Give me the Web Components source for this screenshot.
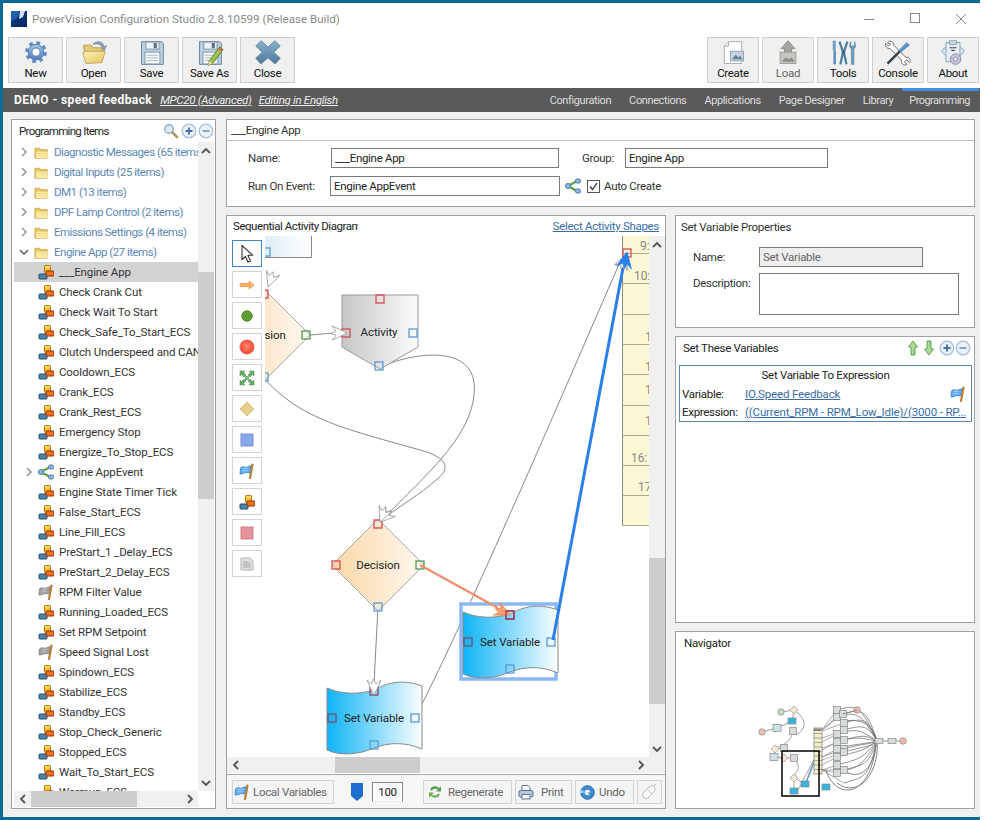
<!DOCTYPE html>
<html>
<head>
<meta charset="utf-8">
<title>PowerVision Configuration Studio</title>
<style>
  html, body { margin: 0; padding: 0; background: #fff; }
  body { font: 11.5px Roboto, "Liberation Sans", sans-serif; letter-spacing: -.3px; color: #222; overflow: hidden; }
</style>
</head>
<body>
<pv-app>
  <pv-title-bar slot="title">PowerVision Configuration Studio 2.8.10599 (Release Build)</pv-title-bar>
  <pv-toolbar slot="toolbar">
    <pv-tool-button icon="gear" slot="left">New</pv-tool-button>
    <pv-tool-button icon="open" slot="left">Open</pv-tool-button>
    <pv-tool-button icon="save" slot="left">Save</pv-tool-button>
    <pv-tool-button icon="saveas" slot="left">Save As</pv-tool-button>
    <pv-tool-button icon="close" slot="left">Close</pv-tool-button>
    <pv-tool-button icon="create" slot="right" narrow>Create</pv-tool-button>
    <pv-tool-button icon="load" slot="right" narrow dim>Load</pv-tool-button>
    <pv-tool-button icon="tools" slot="right" narrow>Tools</pv-tool-button>
    <pv-tool-button icon="console" slot="right" narrow>Console</pv-tool-button>
    <pv-tool-button icon="about" slot="right" narrow>About</pv-tool-button>
  </pv-toolbar>
  <pv-nav-bar slot="nav"></pv-nav-bar>

  <pv-tree-panel slot="tree">
    <pv-tree-row kind="group">Diagnostic Messages (65 items)</pv-tree-row>
    <pv-tree-row kind="group">Digital Inputs (25 items)</pv-tree-row>
    <pv-tree-row kind="group">DM1 (13 items)</pv-tree-row>
    <pv-tree-row kind="group">DPF Lamp Control (2 items)</pv-tree-row>
    <pv-tree-row kind="group">Emissions Settings (4 items)</pv-tree-row>
    <pv-tree-row kind="group" open>Engine App (27 items)</pv-tree-row>
    <pv-tree-row selected>___Engine App</pv-tree-row>
    <pv-tree-row>Check Crank Cut</pv-tree-row>
    <pv-tree-row>Check Wait To Start</pv-tree-row>
    <pv-tree-row>Check_Safe_To_Start_ECS</pv-tree-row>
    <pv-tree-row>Clutch Underspeed and CAN</pv-tree-row>
    <pv-tree-row>Cooldown_ECS</pv-tree-row>
    <pv-tree-row>Crank_ECS</pv-tree-row>
    <pv-tree-row>Crank_Rest_ECS</pv-tree-row>
    <pv-tree-row>Emergency Stop</pv-tree-row>
    <pv-tree-row>Energize_To_Stop_ECS</pv-tree-row>
    <pv-tree-row kind="event">Engine AppEvent</pv-tree-row>
    <pv-tree-row>Engine State Timer Tick</pv-tree-row>
    <pv-tree-row>False_Start_ECS</pv-tree-row>
    <pv-tree-row>Line_Fill_ECS</pv-tree-row>
    <pv-tree-row>PreStart_1 _Delay_ECS</pv-tree-row>
    <pv-tree-row>PreStart_2_Delay_ECS</pv-tree-row>
    <pv-tree-row kind="flag">RPM Filter Value</pv-tree-row>
    <pv-tree-row>Running_Loaded_ECS</pv-tree-row>
    <pv-tree-row>Set RPM Setpoint</pv-tree-row>
    <pv-tree-row kind="flag">Speed Signal Lost</pv-tree-row>
    <pv-tree-row>Spindown_ECS</pv-tree-row>
    <pv-tree-row>Stabilize_ECS</pv-tree-row>
    <pv-tree-row>Standby_ECS</pv-tree-row>
    <pv-tree-row>Stop_Check_Generic</pv-tree-row>
    <pv-tree-row>Stopped_ECS</pv-tree-row>
    <pv-tree-row>Wait_To_Start_ECS</pv-tree-row>
    <pv-tree-row>Warmup_ECS</pv-tree-row>
  </pv-tree-panel>

  <pv-header-panel slot="header"></pv-header-panel>
  <pv-diagram-panel slot="diagram"></pv-diagram-panel>
  <pv-props-panel slot="props"></pv-props-panel>
  <pv-vars-panel slot="vars"></pv-vars-panel>
  <pv-navigator slot="navigator"></pv-navigator>
</pv-app>

<script>
// Icons, all hand drawn. [viewBox size, markup]
const blockIcon = `
  <defs><linearGradient id="y" x1="0" y1="0" x2="0" y2="1"><stop offset="0" stop-color="#ffe46a"/><stop offset="1" stop-color="#f5a800"/></linearGradient></defs>
  <rect x="6.5" y="1.5" width="6" height="7" rx=".8" fill="url(#y)" stroke="#b07a10"/>
  <rect x="1" y="10" width="8" height="5" rx=".8" fill="#4d86a8" stroke="#1f4c6c"/>
  <rect x="8" y="7" width="8" height="5" rx=".8" fill="#f4701c" stroke="#8e2c0c"/>`;
const flagShape = (c1, c2) => `
  <path d="M1.5 5 C4 2.5 6 5 8 4 L12.5 2.5 L11 9.5 C9 10.5 7 8.5 4.5 10.5 L1 11 Z" fill="${c1}" stroke="${c2}" stroke-width=".8"/>
  <path d="M4 5.5 L9 5 M3.5 8 L8 7.5" stroke="#fff" stroke-width=".7" opacity=".6"/>
  <path d="M13.5 1.5 L11 15" stroke="#b5803a" stroke-width="2.2" stroke-linecap="round"/>`;
const floppy = `
  <path d="M4 3 H27 L29 5 V29 H4 Z" fill="#b9cfe0" stroke="#5f7f9c"/>
  <rect x="9" y="3.5" width="15" height="8" fill="#eef2f5" stroke="#7d93a8"/>
  <rect x="18" y="4.5" width="3.5" height="6" fill="#54708a"/>
  <rect x="8" y="15" width="17" height="13.5" fill="#fafafa" stroke="#7d93a8"/>
  <path d="M10 18.5 H23 M10 21.5 H23 M10 24.5 H23" stroke="#9fb1c2"/>`;
const ICONS = {
  gear: [32, `<defs><linearGradient id="g" x1="0" y1="0" x2="0" y2="1"><stop offset="0" stop-color="#a9c8ea"/><stop offset="1" stop-color="#4f7fb5"/></linearGradient></defs>
    <circle cx="16" cy="15" r="10.3" fill="none" stroke="#5f8fc4" stroke-width="4.4" stroke-dasharray="4.1 4"/>
    <circle cx="16" cy="15" r="9" fill="url(#g)" stroke="#4a78ad"/>
    <circle cx="16" cy="15" r="4.6" fill="#fff" stroke="#4a78ad"/>`],
  open: [32, `<defs><linearGradient id="f" x1="0" y1="0" x2="1" y2="1"><stop offset="0" stop-color="#fff2ba"/><stop offset="1" stop-color="#e4c25e"/></linearGradient></defs>
    <path d="M15 5 C20 1 26 2 28 8 L31 7 L28 14 L22 10 L25 9.5 C23 6 19 5 15 7 Z" fill="#8a9cae"/>
    <path d="M4 7 H13 L15 10 H25 V25 L7 28 Z" fill="#e3c873" stroke="#b39a4e"/>
    <path d="M7 14 H29 L25 27 L7 28 L3 16 Z" fill="url(#f)" stroke="#bda25a"/>`],
  save: [32, floppy],
  saveas: [32, floppy + `<path d="M15 25 L27 9 L31 12 L19 28 L14 30 Z" fill="#9bc14c" stroke="#5e7f25"/><path d="M15 25 L19 28 L14 30 Z" fill="#f1d9a8"/><path d="M26 10.5 L30 13.5" stroke="#d95b45" stroke-width="2"/>`],
  close: [32, `<defs><linearGradient id="c" x1="0" y1="0" x2="0" y2="1"><stop offset="0" stop-color="#8bb1cb"/><stop offset="1" stop-color="#4d7a9c"/></linearGradient></defs>
    <path d="M8 2 L16 9 L24 2 L30 8 L22.5 15 L30 22 L24 28.5 L16 21.5 L8 28.5 L2 22 L9.5 15 L2 8 Z" fill="url(#c)" stroke="#5a84a3" stroke-linejoin="round"/>`],
  create: [32, `<path d="M11 3 H26 V28 H6 V8 Z" fill="#fff" stroke="#a4a4a4"/><path d="M11 3 V8 H6" fill="#eee" stroke="#a4a4a4"/>
    <rect x="13" y="14" width="15" height="11" fill="#c6d4e0" stroke="#8b9dae"/><path d="M15 23 L19 18 L22 21 L24 19 L27 23 Z" fill="#5f7f9c"/>`],
  load: [32, `<path d="M16 2 L24 11 H20 V17 H12 V11 H8 Z" fill="#a4a4a0" stroke="#8a8a86"/><rect x="7" y="15" width="18" height="13" fill="#c4c4c0" stroke="#9a9a96"/><path d="M9 26 L13 21 L17 23 L20 21 L24 26 Z" fill="#8d8d88"/>`],
  tools: [32, `<path d="M6 2 V13" stroke="#6fa1c8" stroke-width="3.5"/><path d="M5 13 H8 L8 29 H5 Z" fill="#5f93bd"/>
    <path d="M12 3 L16 15 L13 29 M21 3 L17 15 L20 29" fill="none" stroke="#4f7f9f" stroke-width="2.6"/>
    <circle cx="16.5" cy="15" r="1.8" fill="#2f5f7f"/>
    <path d="M25 3 V8 H29 V3 C31 6 31 10 28.5 11 V29 H25.5 V11 C23 10 23 6 25 3 Z" fill="#6f9dc0" stroke="#4d7a9c" stroke-width=".6"/>`],
  console: [32, `<path d="M4 4 C7 1 11 3 11 7 L25 21 C29 20 31 24 29 27 L26 24 L23.5 26 L26 29 C22 31 19 28 20 24 L7 11 C3 11 1 8 2 5 L5 8 L7.5 6 Z" fill="#fff" stroke="#666" stroke-width="1.1"/>
    <path d="M5 29 L3 27 L17 13 L19 15 Z" fill="#39424c"/><path d="M17 13 L26 4 L29 7 L19 15 Z" fill="#5c94c4" stroke="#3a6d99" stroke-width=".6"/>`],
  about: [32, `<path d="M3 14 L8 9 M3 14 L8 19 M29 14 L24 9 M29 14 L24 19" stroke="#a9cbe3" stroke-width="2"/>
    <path d="M8 4 H24 V26 H8 Z" fill="#e4eef4" stroke="#7f9aad"/><rect x="12" y="2" width="8" height="4" fill="#cfe0ea" stroke="#7f9aad"/>
    <path d="M12 10 H20 M14 13 H18" stroke="#445" stroke-width="1.4"/>
    <circle cx="19" cy="23" r="6" fill="#c9c5dc" stroke="#8884a8"/><circle cx="19" cy="23" r="2.5" fill="#f0eef8" stroke="#8884a8"/>`],
  logo: [16, `<defs><linearGradient id="l" x1="0" y1="0" x2="1" y2="1"><stop offset="0" stop-color="#0d3f8e"/><stop offset="1" stop-color="#08245c"/></linearGradient></defs>
    <rect width="16" height="16" fill="url(#l)"/><path d="M0 0 H8 C8 6 5 9 0 10 Z" fill="#1f5fae"/><path d="M9 0 H14 L12 6 L8 8 Z" fill="#cfe0f4"/>`],
  folder: [16, `<path d="M1 3.5 H6 L7.5 5 H14 V14 H1 Z" fill="#e8c766" stroke="#c4a449"/><path d="M2 7 H14.5 V14 H2 Z" fill="#fbe9a6"/><path d="M2 9 H14" stroke="#f0d67f"/>`],
  blocks: [16, blockIcon],
  flaggray: [16, flagShape('#a0a0a0', '#7a7a7a')],
  flagblue: [16, flagShape('#62b0f2', '#2c7cc8')],
  share: [16, `<path d="M3 8 L12 3 M3 8 L12 13" stroke="#5aa548" stroke-width="2.4"/><circle cx="3" cy="8" r="2.6" fill="#8fb6d8" stroke="#4f7fa8"/><rect x="10.5" y="1" width="5" height="4" rx="1.5" fill="#8fb6d8" stroke="#4f7fa8"/><rect x="10.5" y="11" width="5" height="4" rx="1.5" fill="#8fb6d8" stroke="#4f7fa8"/>`],
  search: [16, `<circle cx="6" cy="6" r="4.3" fill="#dcebf6" stroke="#8fb1cc" stroke-width="1.5"/><path d="M9.5 9.5 L14 14" stroke="#b49a62" stroke-width="2.6" stroke-linecap="round"/>`],
  plus: [16, `<circle cx="8" cy="8" r="6.8" fill="#eaf1f7" stroke="#a8c0d6" stroke-width="1.3"/><path d="M8 4.5 V11.5 M4.5 8 H11.5" stroke="#3f6eaa" stroke-width="1.8"/>`],
  minus: [16, `<circle cx="8" cy="8" r="6.8" fill="#eaf1f7" stroke="#a8c0d6" stroke-width="1.3"/><path d="M4.5 8 H11.5" stroke="#7f9cba" stroke-width="1.8"/>`],
  up: [16, `<path d="M8 1 L12.5 7 H10 V15 H6 V7 H3.5 Z" fill="#a8d89a" stroke="#5fa552"/>`],
  down: [16, `<path d="M8 15 L12.5 9 H10 V1 H6 V9 H3.5 Z" fill="#a8d89a" stroke="#5fa552"/>`],
  cursor: [20, `<path d="M5 1.5 V15.5 L8.5 12.5 L11 18 L13.5 17 L11 11.5 L15.5 11 Z" fill="#fff" stroke="#333" stroke-width="1.1"/>`],
  arrow: [16, `<path d="M1 6.5 H10 V4 L15 8 L10 12 V9.5 H1 Z" fill="#f8b060" stroke="#ee9040" stroke-width=".7"/>`],
  dotgreen: [16, `<circle cx="8" cy="8" r="5.2" fill="#5f9e35" stroke="#4c842a"/>`],
  dotred: [16, `<defs><radialGradient id="r" cx=".5" cy=".45"><stop offset="0" stop-color="#ff8a70"/><stop offset="1" stop-color="#f04a35"/></radialGradient></defs><circle cx="8" cy="8" r="7" fill="url(#r)" stroke="#ee6050"/>`],
  expand: [16, `<path d="M1 1 H6 L4.5 2.5 L7 5 L5 7 L2.5 4.5 L1 6 Z M15 1 V6 L13.5 4.5 L11 7 L9 5 L11.5 2.5 L10 1 Z M1 15 V10 L2.5 11.5 L5 9 L7 11 L4.5 13.5 L6 15 Z M15 15 H10 L11.5 13.5 L9 11 L11 9 L13.5 11.5 L15 10 Z" fill="#66aa66" stroke="#4f8f4f" stroke-width=".5"/><rect x="6" y="6" width="4" height="4" fill="#7dbb7d"/>`],
  diamond: [16, `<path d="M8 1 L15 8 L8 15 L1 8 Z" fill="#e4d08c" stroke="#d8c27c"/>`],
  bluesq: [16, `<rect x="2" y="2" width="12" height="12" fill="#86a8e8" stroke="#7494d4"/>`],
  redsq: [16, `<rect x="2" y="2" width="12" height="12" fill="#e4929c" stroke="#d47f8a"/>`],
  doc: [16, `<path d="M2 2 H11 L14 5 V14 H2 Z" fill="#e0e0e0" stroke="#b4b4b4"/><path d="M4 5 H9 L12 8 V12 H4 Z" fill="#c4c4c4"/>`],
  regen: [16, `<path d="M3 6 C4 2 9 1 12 4 L14 2.5 V7.5 H9 L11 5.5 C9 4 6 4.5 5 6.5 Z" fill="#55a04c"/><path d="M13 10 C12 14 7 15 4 12 L2 13.5 V8.5 H7 L5 10.5 C7 12 10 11.5 11 9.5 Z" fill="#70b060"/>`],
  print: [16, `<path d="M4 1.5 H10 L12 3.5 V7 H4 Z" fill="#f8f8f8" stroke="#5b7a98"/><rect x="1" y="6.5" width="14" height="6.5" rx="1.5" fill="#b8c8d8" stroke="#50708e"/><rect x="4" y="10.5" width="8" height="4.5" fill="#fff" stroke="#5b7a98"/>`],
  undo: [16, `<circle cx="8.5" cy="8.5" r="6.8" fill="#3f8ccc" stroke="#2f70a8"/><circle cx="8.5" cy="8.5" r="2.8" fill="#eaf4fb"/><path d="M8 8.5 H15.5 L12.5 11.5 Z" fill="#3f8ccc"/><path d="M1 5 L6 8 L1 10 Z" fill="#9fd0f0"/>`],
  mouse: [16, `<path d="M3 14 C0 11 3 7 6 5 L10 2 C12 1 14 3 14 5 C14 8 10 10 8 13 C6 15 4 15 3 14 Z" fill="#fafafa" stroke="#bbb"/><path d="M7 6 L11 10" stroke="#ddb0b0"/><path d="M13 2 L15 0" stroke="#bbb"/>`],
};

class PvIcon extends HTMLElement {
  connectedCallback() {
    const [box, markup] = ICONS[this.getAttribute('name')];
    const size = this.getAttribute('size') || 16;
    this.attachShadow({ mode: 'open' }).innerHTML = `
      <style>:host { display: inline-block; flex: none; width: ${size}px; height: ${size}px; line-height: 0; }</style>
      <svg xmlns="http://www.w3.org/2000/svg" width="${size}" height="${size}" viewBox="0 0 ${box} ${box}">${markup}</svg>`;
  }
}
customElements.define('pv-icon', PvIcon);

// Page frame
class PvApp extends HTMLElement {
  constructor() {
    super();
    this.attachShadow({ mode: 'open' }).innerHTML = `
    <style>
      :host { display: block; width: 986px; height: 820px; overflow: hidden; }
      .window {
        box-sizing: border-box; width: 980px; height: 820px;
        border: solid #0a6a93; border-width: 3px 0 3px 3px;
        background: #f0f0f0; display: flex; flex-direction: column;
      }
      .main {
        flex: 1; min-height: 0; box-sizing: border-box; padding: 7px 5px 8px 8px;
        display: grid; grid-template-columns: 205px 1fr; column-gap: 10px;
      }
      .work { display: flex; flex-direction: column; gap: 8px; min-height: 0; min-width: 0; }
      .lower { flex: 1; min-height: 0; display: grid; grid-template-columns: 440px 300px; column-gap: 9px; }
      .side { display: grid; grid-template-columns: minmax(0, 1fr); grid-template-rows: 113px 287px 178px; row-gap: 8px; }
    </style>
    <div class="window">
      <slot name="title"></slot>
      <slot name="toolbar"></slot>
      <slot name="nav"></slot>
      <div class="main">
        <slot name="tree"></slot>
        <div class="work">
          <slot name="header"></slot>
          <div class="lower">
            <slot name="diagram"></slot>
            <div class="side">
              <slot name="props"></slot>
              <slot name="vars"></slot>
              <slot name="navigator"></slot>
            </div>
          </div>
        </div>
      </div>
    </div>`;
  }
}
customElements.define('pv-app', PvApp);

class PvTitleBar extends HTMLElement {
  constructor() {
    super();
    this.attachShadow({ mode: 'open' }).innerHTML = `
    <style>
      :host { display: flex; align-items: center; height: 31px; background: #fff; padding-left: 8px; }
      .text { margin-left: 5px; flex: 1; color: #8a8a8a; font-size: 11.6px; letter-spacing: 0; }
      .btn { width: 46px; height: 31px; display: flex; align-items: center; justify-content: center; }
      .btns { display: flex; margin-right: -4px; }
    </style>
    <pv-icon name="logo"></pv-icon>
    <div class="text"><slot></slot></div>
    <div class="btns">
      <div class="btn"><svg width="12" height="12"><path d="M1 6.5 H11" stroke="#888"/></svg></div>
      <div class="btn"><svg width="12" height="12"><rect x="1.5" y=".5" width="9" height="9" fill="none" stroke="#888"/></svg></div>
      <div class="btn"><svg width="12" height="12"><path d="M1 1 L11 11 M11 1 L1 11" stroke="#888"/></svg></div>
    </div>`;
  }
}
customElements.define('pv-title-bar', PvTitleBar);

class PvToolbar extends HTMLElement {
  constructor() {
    super();
    this.attachShadow({ mode: 'open' }).innerHTML = `
    <style>
      :host { display: flex; justify-content: space-between; height: 54px; box-sizing: border-box; background: #fff; padding: 3px 1px 5px 5px; }
      .grp { display: flex; gap: 3px; }
    </style>
    <div class="grp"><slot name="left"></slot></div>
    <div class="grp"><slot name="right"></slot></div>`;
  }
}
customElements.define('pv-toolbar', PvToolbar);

class PvToolButton extends HTMLElement {
  connectedCallback() {
    const w = this.hasAttribute('narrow') ? 52 : 55;
    const c = this.hasAttribute('dim') ? '#666' : '#111';
    this.attachShadow({ mode: 'open' }).innerHTML = `
    <style>
      :host { display: flex; flex-direction: column; align-items: center; box-sizing: border-box; width: ${w}px; height: 46px;
        background: #f0f0f0; border: 1px solid #cfcfcf; color: ${c}; }
      pv-icon { margin-top: 1px; }
      .t { line-height: 14px; margin-top: -1px; white-space: nowrap; }
    </style>
    <pv-icon name="${this.getAttribute('icon')}" size="28"></pv-icon>
    <div class="t"><slot></slot></div>`;
  }
}
customElements.define('pv-tool-button', PvToolButton);

class PvNavBar extends HTMLElement {
  constructor() {
    super();
    const tabs = ['Configuration', 'Connections', 'Applications', 'Page Designer', 'Library'];
    this.attachShadow({ mode: 'open' }).innerHTML = `
    <style>
      :host { display: flex; align-items: stretch; height: 24px; background: #5a5a5a; color: #fff; padding-left: 11px; padding-right: 1px; }
      b { align-self: center; font-size: 12px; letter-spacing: .42px; }
      i { align-self: center; text-decoration: underline; color: #eee; }
      .m1 { margin-left: 8px; } .m2 { margin-left: 7px; }
      .tabs { margin-left: auto; display: flex; }
      .tab { padding: 0 9px; display: flex; align-items: center; color: #dedede; font-size: 11px; letter-spacing: -.38px; }
      .tab.on { box-sizing: border-box; border-top: 3px solid #3b8ee0; padding: 0 9px 3px 7px; letter-spacing: -.55px; }
    </style>
    <b>DEMO - speed feedback</b>
    <i class="m1">MPC20 (Advanced)</i>
    <i class="m2">Editing in English</i>
    <div class="tabs">${tabs.map(t => `<div class="tab">${t}</div>`).join('')}<div class="tab on">Programming</div></div>`;
  }
}
customElements.define('pv-nav-bar', PvNavBar);

class PvScrollbar extends HTMLElement {
  connectedCallback() {
    const v = this.getAttribute('orient') !== 'h';
    const offset = this.getAttribute('offset') || 0;
    const size = this.getAttribute('size') || 0;
    const chev = d => `<svg width="10" height="10" viewBox="0 0 10 10"><path d="${d}" fill="none" stroke="#555" stroke-width="1.8"/></svg>`;
    const first = v ? chev('M1 7 L5 3 L9 7') : chev('M7 1 L3 5 L7 9');
    const last = v ? chev('M1 3 L5 7 L9 3') : chev('M3 1 L7 5 L3 9');
    this.attachShadow({ mode: 'open' }).innerHTML = `
    <style>
      :host { display: flex; flex-direction: ${v ? 'column' : 'row'}; background: #f0f0f0; min-width: 0; min-height: 0; }
      .end { flex: none; ${v ? 'height' : 'width'}: 17px; display: flex; align-items: center; justify-content: center; }
      .track { flex: 1; min-${v ? 'height' : 'width'}: 0; }
      .thumb { background: #cdcdcd; ${v ? `height: ${size}px; margin-top: ${offset}px;` : `width: ${size}px; height: 100%; margin-left: ${offset}px;`} }
    </style>
    <div class="end">${first}</div>
    <div class="track"><div class="thumb"></div></div>
    <div class="end">${last}</div>`;
  }
}
customElements.define('pv-scrollbar', PvScrollbar);

// Left tree
class PvTreePanel extends HTMLElement {
  constructor() {
    super();
    this.attachShadow({ mode: 'open' }).innerHTML = `
    <style>
      :host { display: grid; grid-template-columns: 184px 16px; grid-template-rows: 22px 649px 16px; box-sizing: border-box;
        height: 690px; background: #fff; border: 1px solid #a0a0a0; padding-left: 2px; }
      .head { grid-column: 1 / 3; display: flex; align-items: center; padding-left: 5px; color: #222; }
      .head span { flex: 1; letter-spacing: -.7px; }
      .head pv-icon { margin-left: 1.5px; }
      .list { overflow: hidden; }
    </style>
    <div class="head"><span>Programming Items</span>
      <pv-icon name="search"></pv-icon><pv-icon name="plus"></pv-icon><pv-icon name="minus"></pv-icon></div>
    <div class="list"><slot></slot></div>
    <pv-scrollbar offset="113" size="227"></pv-scrollbar>
    <pv-scrollbar orient="h" offset="0" size="106"></pv-scrollbar>`;
  }
}
customElements.define('pv-tree-panel', PvTreePanel);

class PvTreeRow extends HTMLElement {
  connectedCallback() {
    const kind = this.getAttribute('kind') || 'item';
    const group = kind === 'group';
    const open = this.hasAttribute('open');
    const icon = { group: 'folder', item: 'blocks', flag: 'flaggray', event: 'share' }[kind];
    const chevron = open
      ? '<svg width="10" height="10" viewBox="0 0 10 10"><path d="M1 3 L5 7 L9 3" fill="none" stroke="#666" stroke-width="1.6"/></svg>'
      : '<svg width="10" height="10" viewBox="0 0 10 10"><path d="M3 1 L7 5 L3 9" fill="none" stroke="#999" stroke-width="1.6"/></svg>';
    this.attachShadow({ mode: 'open' }).innerHTML = `
    <style>
      :host { display: flex; align-items: center; height: 20px; white-space: nowrap; overflow: hidden;
        letter-spacing: ${group ? -.5 : -.12}px;
        color: ${group ? '#5b87b4' : '#333'}; background: ${this.hasAttribute('selected') ? '#d3d3d3' : 'transparent'}; }
      .twist { flex: none; width: ${group ? 20 : 24}px; display: flex; justify-content: center; ${kind === 'event' ? 'padding-left: 6px; box-sizing: border-box;' : ''} }
      .t { margin-left: 5px; }
    </style>
    <div class="twist">${group || kind === 'event' ? chevron : ''}</div>
    <pv-icon name="${icon}" size="${group ? 15 : 16}"></pv-icon>
    <div class="t"><slot></slot></div>`;
  }
}
customElements.define('pv-tree-row', PvTreeRow);

// Small form pieces
class PvInput extends HTMLElement {
  connectedCallback() {
    const w = this.getAttribute('w');
    const h = this.getAttribute('h') || 20;
    const bg = this.hasAttribute('readonly') ? '#eeeeee' : '#fff';
    const c = this.hasAttribute('readonly') ? '#666' : '#222';
    this.attachShadow({ mode: 'open' }).innerHTML = `
    <style>
      :host { display: block; flex: none; box-sizing: border-box; width: ${w}px; height: ${h}px; border: 1px solid #7a7a7a;
        background: ${bg}; color: ${c}; padding-left: 3px; line-height: 18px; white-space: nowrap; overflow: hidden; }
    </style><slot></slot>`;
  }
}
customElements.define('pv-input', PvInput);

class PvHeaderPanel extends HTMLElement {
  constructor() {
    super();
    this.attachShadow({ mode: 'open' }).innerHTML = `
    <style>
      :host { display: block; box-sizing: border-box; height: 88px; background: #fff; border: 1px solid #a0a0a0; color: #333; }
      .head { height: 20px; line-height: 20px; padding-left: 4px; border-bottom: 1px solid #bdbdbd; }
      .rows { padding: 7px 0 0 21px; display: flex; flex-direction: column; gap: 8px; }
      .row { display: flex; align-items: center; height: 20px; }
      .chk { width: 13px; height: 13px; box-sizing: border-box; border: 1px solid #555; display: flex; margin: 0 4px 0 6px; }
    </style>
    <div class="head">___Engine App</div>
    <div class="rows">
      <div class="row">
        <span style="width:83px">Name:</span><pv-input w="228">___Engine App</pv-input>
        <span style="width:43px;margin-left:23px">Group:</span><pv-input w="203">Engine App</pv-input>
      </div>
      <div class="row">
        <span style="width:82px">Run On Event:</span><pv-input w="230">Engine AppEvent</pv-input>
        <pv-icon name="share" style="margin-left:5px"></pv-icon>
        <div class="chk"><svg width="11" height="11"><path d="M2 5.5 L4.5 8.5 L9 2" fill="none" stroke="#333" stroke-width="1.3"/></svg></div>
        <span>Auto Create</span>
      </div>
    </div>`;
  }
}
customElements.define('pv-header-panel', PvHeaderPanel);

class PvPropsPanel extends HTMLElement {
  constructor() {
    super();
    this.attachShadow({ mode: 'open' }).innerHTML = `
    <style>
      :host { display: block; box-sizing: border-box; background: #fff; border: 1px solid #a0a0a0; color: #333; }
      .head { height: 22px; line-height: 22px; padding-left: 5px; }
      .rows { margin: 9px 0 0 17px; display: flex; flex-direction: column; gap: 6px; }
      .row { display: flex; }
      .l { width: 66px; flex: none; line-height: 20px; }
    </style>
    <div class="head">Set Variable Properties</div>
    <div class="rows">
      <div class="row"><span class="l">Name:</span><pv-input w="164" readonly>Set Variable</pv-input></div>
      <div class="row"><span class="l">Description:</span><pv-input w="200" h="42"></pv-input></div>
    </div>`;
  }
}
customElements.define('pv-props-panel', PvPropsPanel);

class PvVarsPanel extends HTMLElement {
  constructor() {
    super();
    this.attachShadow({ mode: 'open' }).innerHTML = `
    <style>
      :host { display: block; box-sizing: border-box; background: #fff; border: 1px solid #a0a0a0; color: #222; min-width: 0; }
      .head { display: flex; align-items: center; height: 22px; padding: 0 3px 0 7px; }
      .head span { flex: 1; }
      .head pv-icon.gap { margin-left: 2px; }
      .box { margin: 6px 2px 0 3px; height: 57px; box-sizing: border-box; border: 1px solid #5a87ab; }
      .title { height: 19px; line-height: 18px; text-align: center; }
      .row { display: flex; align-items: center; height: 18px; padding-left: 2px; }
      .l { width: 63px; flex: none; }
      a { color: #3a6ea5; text-decoration: underline; white-space: nowrap; letter-spacing: -.15px; }
      .row pv-icon { margin-left: auto; margin-right: 5px; }
    </style>
    <div class="head"><span>Set These Variables</span>
      <pv-icon name="up"></pv-icon><pv-icon name="down"></pv-icon>
      <pv-icon class="gap" name="plus"></pv-icon><pv-icon name="minus"></pv-icon></div>
    <div class="box">
      <div class="title">Set Variable To Expression</div>
      <div class="row"><span class="l">Variable:</span><a>IO.Speed Feedback</a><pv-icon name="flagblue"></pv-icon></div>
      <div class="row"><span class="l">Expression:</span><a>((Current_RPM - RPM_Low_Idle)/(3000 - RP...</a></div>
    </div>`;
  }
}
customElements.define('pv-vars-panel', PvVarsPanel);

// Navigator: a shrunken copy of the whole diagram
class PvNavigator extends HTMLElement {
  constructor() {
    super();
    const sq = (x, y, w = 7, h = 7, c = '#d8dcdc') => `<rect x="${x - w / 2}" y="${y - h / 2}" width="${w}" height="${h}" fill="${c}" stroke="#888" stroke-width=".7"/>`;
    const dia = (x, y) => `<path d="M${x} ${y - 4} L${x + 4} ${y} L${x} ${y + 4} L${x - 4} ${y} Z" fill="#fbe6d0" stroke="#999" stroke-width=".7"/>`;
    const dot = (x, y, c) => `<circle cx="${x}" cy="${y}" r="3.2" fill="${c}" stroke="#888" stroke-width=".7"/>`;
    const blue = (x, y) => sq(x, y, 8, 6, '#35b4e0');
    const rights = [[837, 710], [837, 717], [843, 714], [844, 723], [844, 730], [837, 734], [844, 740], [837, 742], [844, 749], [837, 749], [844, 752], [837, 757], [837, 765], [844, 770], [837, 773], [844, 783]];
    let curves = '';
    rights.forEach(([x, y]) => {
      curves += `<path d="M822 ${Math.min(770, Math.max(730, y + 8))} L${x} ${y}" stroke="#888" fill="none" stroke-width=".7"/>`;
      curves += `<path d="M${x} ${y} C ${x + 20} ${y - 6}, ${x + 24} ${y - 4}, 877 741" stroke="#777" fill="none" stroke-width=".8"/>`;
    });
    curves += `<path d="M837 783 C 860 800, 880 770, 877 741 M826 770 C 835 800, 870 800, 876 745 M845 721 C 862 718, 874 726, 877 741 M845 771 C 862 782, 874 765, 876 745" stroke="#777" fill="none" stroke-width=".9"/>`;
    let ruler = '';
    for (let y = 729; y < 774; y += 4.5) ruler += `<path d="M814 ${y} H822" stroke="#888" stroke-width=".7"/>`;
    this.attachShadow({ mode: 'open' }).innerHTML = `
    <style>
      :host { display: block; position: relative; box-sizing: border-box; background: #fff; border: 1px solid #a0a0a0; color: #222; }
      .head { height: 22px; line-height: 22px; padding-left: 8px; }
      svg { position: absolute; left: 0; top: 0; }
    </style>
    <div class="head">Navigator</div>
    <svg width="298" height="176" viewBox="676 632 298 176">
      <path d="M781 712 L794 710 C 806 718, 808 728, 796 735 M794 710 L792 721 L777 728 M762 732 L777 728 M793 731 C 790 745, 780 745, 775 749 L784 748 M775 749 L774 757 L784 758 L794 758 M794 758 C 803 770, 795 770, 794 778 L794 791 M794 778 L805 784 M805 784 L818 750 M798 790 L819 750" stroke="#888" fill="none" stroke-width=".8"/>
      <path d="M806 783 L819 751" stroke="#3f8ce0" fill="none" stroke-width="1"/>
      ${curves}
      ${dot(781, 712, '#c4e0c4')}${dia(794, 710)}${blue(792, 721)}${sq(777, 728, 8, 7, '#cfe0e4')}${sq(793, 731)}${dot(762, 732, '#f0c0b0')}
      ${dia(775, 749)}${sq(784, 748)}${sq(774, 757, 8, 7, '#cfe0ea')}${dia(784, 758)}${sq(794, 758)}${dia(794, 778)}${blue(805, 784)}${blue(794, 791)}${blue(826, 787)}
      <rect x="814" y="728" width="8" height="46" fill="#f3f0cc" stroke="#777" stroke-width=".7"/><path d="M814 730 H821" stroke="#111"/>${ruler}
      ${rights.slice(0, 15).map(([x, y]) => sq(x, y)).join('')}
      ${dot(857, 710, '#f0b8a8')}
      <path d="M843 714 L857 710" stroke="#777" stroke-width=".8"/>
      <path d="M878 741 L892 741 L903 741" stroke="#777" stroke-width=".8"/>
      ${sq(879, 741, 8, 5)}${sq(892, 741, 8, 5)}${dot(903, 741, '#f0b8a8')}
      <rect x="782" y="751" width="37" height="45" fill="none" stroke="#000" stroke-width="1.5"/>
    </svg>`;
  }
}
customElements.define('pv-navigator', PvNavigator);

// Centre: the activity diagram
class PvToolbox extends HTMLElement {
  constructor() {
    super();
    const names = ['cursor', 'arrow', 'dotgreen', 'dotred', 'expand', 'diamond', 'bluesq', 'flagblue', 'blocks', 'redsq', 'doc'];
    this.attachShadow({ mode: 'open' }).innerHTML = `
    <style>
      :host { position: absolute; left: 0; top: 0; width: 38px; height: 344px; box-sizing: border-box; background: #fff;
        padding: 4px 0 0 5px; display: flex; flex-direction: column; gap: 4px; }
      .b { box-sizing: border-box; width: 30px; height: 27px; border: 1px solid #d4d4d4; display: flex; align-items: center; justify-content: center; }
      .b.on { border-color: #3f86c8; }
    </style>
    ${names.map((n, i) => `<div class="b ${i === 0 ? 'on' : ''}"><pv-icon name="${n}" size="${i === 0 ? 20 : 16}"></pv-icon></div>`).join('')}`;
  }
}
customElements.define('pv-toolbox', PvToolbox);

class PvDiagram extends HTMLElement {
  constructor() {
    super();
    const port = (x, y, c) => `<rect x="${x - 4}" y="${y - 4}" width="8" height="8" fill="none" stroke="${c}" stroke-width="1.3"/>`;
    const R = '#d64a58', B = '#5a9ad8', G = '#4f9a4f';
    const head = (x, y, deg, fill, stroke, s = 1) =>
      `<polygon transform="translate(${x} ${y}) rotate(${deg}) scale(${s})" points="0,0 -7,-3.5 -15,-7 -11,-2 -16,0.5 -11,2.5 -15,7 -7,3.5" fill="${fill}" stroke="${stroke}" stroke-width=".8"/>`;
    const text = (x, y, t) => `<text x="${x}" y="${y}" text-anchor="middle" font-size="11.5" fill="#222">${t}</text>`;
    const diamond = (x, y) => `<path d="M${x} ${y - 46} L${x + 46} ${y} L${x} ${y + 46} L${x - 46} ${y} Z" fill="url(#dg)" stroke="#a8a8a8"/>`;
    const wave = `M327 688 C 340 694, 358 695, 374 690 C 385 684, 400 678, 422 686 L422 749 C 405 742, 390 742, 374 748 C 358 755, 340 756, 327 750 Z`;
    const setVar = (dx, dy) => `<g transform="translate(${dx} ${dy})">
        <path d="${wave}" fill="url(#wg)" stroke="#8a8a8a"/>
        ${port(374, 691, '#9a4060')}${port(332, 718, '#7a4a70')}${port(415, 718, B)}${port(374, 745, B)}
        ${text(374, 722, 'Set Variable')}
      </g>`;
    const rulerLines = [253, 283, 314, 344, 374, 405, 435, 465, 495, 525].map(y => `<path d="M622 ${y + .5} H649" stroke="#aca98f"/>`).join('');
    const rulerText = [[640, 250, '9:'], [634, 280, '10:'], [645, 341, '12:'], [645, 371, '13:'], [645, 394, '14:'], [645, 425, '15:'], [631, 462, '16:'], [638, 491, '17:']]
      .map(([x, y, t]) => `<text x="${x}" y="${y}" font-size="12" fill="#888">${t}</text>`).join('');
    this.attachShadow({ mode: 'open' }).innerHTML = `
    <style>
      :host { display: block; position: relative; background: #fff; overflow: hidden; letter-spacing: -.1px; }
      svg { display: block; }
    </style>
    <svg xmlns="http://www.w3.org/2000/svg" width="422" height="521" viewBox="227 236 422 521">
      <defs>
        <linearGradient id="dg"><stop offset="0" stop-color="#fbd7a6"/><stop offset="1" stop-color="#fff9f2"/></linearGradient>
        <linearGradient id="ag"><stop offset="0" stop-color="#c6c6c6"/><stop offset="1" stop-color="#fcfcfc"/></linearGradient>
        <linearGradient id="wg"><stop offset="0" stop-color="#0fb4f6"/><stop offset="1" stop-color="#fbfeff"/></linearGradient>
        <linearGradient id="tg"><stop offset="0" stop-color="#b8dcee"/><stop offset="1" stop-color="#fff"/></linearGradient>
        <clipPath id="rc"><rect x="622" y="236" width="27" height="290"/></clipPath>
      </defs>

      <rect x="622" y="236" width="27" height="290" fill="#fbf8d3"/>
      <path d="M622.5 236 V526" stroke="#888"/>
      <g clip-path="url(#rc)">${rulerLines}${rulerText}</g>

      <path d="M215 236 H311 V257 H215 Z" fill="url(#tg)"/>
      <path d="M311.5 236 V257.5 H260" fill="none" stroke="#888"/>
      ${port(266, 252, B)}

      <path d="M310 335 L334 333" stroke="#888" fill="none"/>
      <path d="M380 367 C 420 350, 480 345, 474 395 C 470 440, 420 480, 381 521" stroke="#888" fill="none"/>
      <path d="M264 378 C 300 420, 350 430, 420 450 C 450 458, 450 470, 436 480 C 420 495, 400 505, 381 521" stroke="#888" fill="none"/>
      <path d="M378 607 L374 684" stroke="#888" fill="none"/>
      <path d="M417 714 C 470 610, 560 400, 620 262" stroke="#888" fill="none"/>

      ${diamond(264, 335)}
      ${port(264, 294, R)}${port(222, 335, R)}${port(306, 335, G)}${port(264, 377, B)}
      ${text(264, 339, 'Decision')}
      ${head(268, 287, 110, '#fff', '#999')}

      <path d="M342 295 H418 V347 L380 369 L342 347 Z" fill="url(#ag)" stroke="#999"/>
      ${port(380, 299, R)}${port(346, 333, R)}${port(413, 333, B)}${port(379, 366, B)}
      ${text(379, 336, 'Activity')}
      ${head(347, 333, 0, '#fff', '#999')}

      ${diamond(378, 565)}
      ${port(378, 524, R)}${port(336, 565, R)}${port(420, 565, G)}${port(378, 607, B)}
      ${text(378, 569, 'Decision')}
      ${head(380, 522, 135, '#fff', '#999')}
      ${head(380, 522, 112, '#fff', '#999')}

      ${setVar(0, 0)}
      ${head(374, 695, 90, '#fff', '#999')}

      <rect x="461" y="604" width="95" height="75" fill="#fff" stroke="#8ab8f5" stroke-width="3.5"/>
      ${setVar(136, -76)}

      ${head(510, 612, 5, '#777', '#777', .3)}
      <path d="M420 565 L498 608" stroke="#f09070" stroke-width="2.4" fill="none"/>
      ${head(510, 615, 25, '#f4a070', '#e88858')}
      ${port(510, 615, '#9a4060')}

      ${port(627, 253, R)}
      ${head(627, 254, -66, '#fff', '#999')}
      <path d="M553 640 L623 268" stroke="#2a80e8" stroke-width="3" fill="none"/>
      ${head(627, 252, -79, '#2a80e8', '#2a80e8', 1.05)}
    </svg>
    <pv-toolbox></pv-toolbox>`;
  }
}
customElements.define('pv-diagram', PvDiagram);

class PvBarButton extends HTMLElement {
  connectedCallback() {
    const gap = this.getAttribute('gap') || 4;
    const pad = this.getAttribute('pad') || 4;
    const icon = this.getAttribute('icon');
    this.attachShadow({ mode: 'open' }).innerHTML = `
    <style>
      :host { display: flex; align-items: center; flex: none; gap: ${gap}px; box-sizing: border-box; height: 24px; width: ${this.getAttribute('w')}px;
        padding-left: ${pad}px; border: 1px solid #d4d4d4; color: #666; margin-right: 3px; background: #f4f4f4; white-space: nowrap; }
    </style>
    <pv-icon name="${icon}"></pv-icon><slot></slot>`;
  }
}
customElements.define('pv-bar-button', PvBarButton);

class PvDiagramPanel extends HTMLElement {
  constructor() {
    super();
    this.attachShadow({ mode: 'open' }).innerHTML = `
    <style>
      :host { display: flex; flex-direction: column; box-sizing: border-box; background: #fff; border: 1px solid #a0a0a0; color: #222; min-height: 0; }
      .head { height: 20px; display: flex; align-items: center; justify-content: space-between; padding: 0 6px 0 6px; flex: none; }
      .title { width: 125px; overflow: hidden; white-space: nowrap; letter-spacing: -.45px; }
      a { color: #3a6ea5; text-decoration: underline; }
      .canvas { display: grid; grid-template-columns: 422px 16px; grid-template-rows: 521px 16px; flex: none; }
      .corner { background: #f0f0f0; }
      .bar { flex: 1; border-top: 1px solid #a8a8a8; margin-top: 1px; display: flex; align-items: center; padding-left: 5px; background: #f6f6f6; }
      .zoom { box-sizing: border-box; width: 33px; height: 20px; border: 1px solid #888; border-bottom-color: #eee; background: #fafafa; text-align: center; line-height: 18px; color: #222; margin: 0 20px 0 9px; }
      .shield { margin-left: 14px; width: 12px; height: 18px; flex: none; }
    </style>
    <div class="head"><div class="title">Sequential Activity Diagram</div><a>Select Activity Shapes</a></div>
    <div class="canvas">
      <pv-diagram></pv-diagram>
      <pv-scrollbar offset="305" size="146"></pv-scrollbar>
      <pv-scrollbar orient="h" offset="91" size="85"></pv-scrollbar>
      <div class="corner"></div>
    </div>
    <div class="bar">
      <pv-bar-button icon="flagblue" w="102" pad="1" gap="3">Local Variables</pv-bar-button>
      <svg class="shield" viewBox="0 0 12 18"><path d="M0 0 H12 V13 L6 18 L0 13 Z" fill="#1e6fd0"/></svg>
      <div class="zoom">100</div>
      <pv-bar-button icon="regen" w="89" pad="3" gap="5">Regenerate</pv-bar-button>
      <pv-bar-button icon="print" w="57" pad="2" gap="7">Print</pv-bar-button>
      <pv-bar-button icon="undo" w="59" pad="3" gap="4">Undo</pv-bar-button>
      <pv-bar-button icon="mouse" w="25" pad="3"></pv-bar-button>
    </div>`;
  }
}
customElements.define('pv-diagram-panel', PvDiagramPanel);
</script>
</body>
</html>
